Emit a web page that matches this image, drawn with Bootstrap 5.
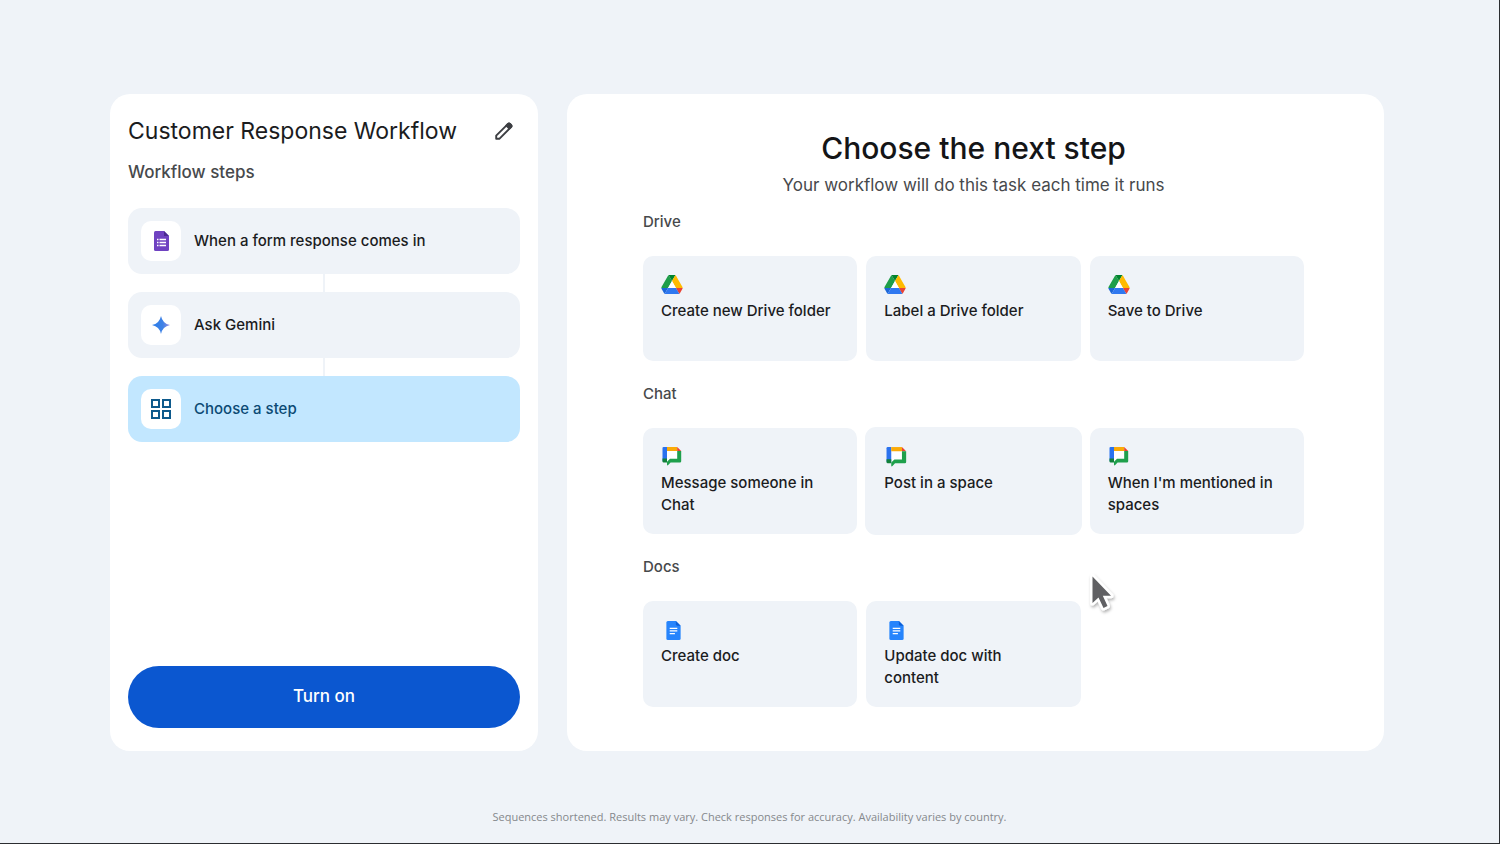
<!DOCTYPE html>
<html lang="en">
<head>
<meta charset="utf-8">
<meta name="viewport" content="width=device-width, initial-scale=1">
<title>Customer Response Workflow</title>
<link href="https://cdn.jsdelivr.net/npm/bootstrap@5.3.0/dist/css/bootstrap.min.css" rel="stylesheet">
<style>
  body { font-family: Inter, Roboto, sans-serif; font-size: 15px; line-height: 22px; color: #1b1c1e; background: #eff3f8; }
  .page { border-right: 1px solid #2b2d30; border-bottom: 1px solid #2b2d30; padding-top: 94px; }
  .board { display: grid; grid-template-columns: 428fr 817fr; gap: 29px; margin: 0 115px 0 110px; }
  .panel { background: #fff; border-radius: 20px; }
  .builder { padding: 18px 18px 23px; }
  .flow-title { font-size: 23px; line-height: 38px; font-weight: 400; color: #1b1c1e; }
  .flow-sub { font-size: 17px; line-height: 22px; font-weight: 500; color: #47494c; margin-top: 11px; }
  .edit-btn { width: 32px; height: 32px; }
  .steps { margin-top: 25px; }
  .step { min-height: 66px; padding: 12px 13px; gap: 13px; border-radius: 14px; background: #eff3f8; border: 0; font-weight: 500; color: #1b1c1e; text-align: left; }
  .step.current { background: #c2e7ff; color: #0b4a74; }
  .tile { width: 40px; height: 40px; border-radius: 10px; background: #fff; }
  .link-line { width: 2px; height: 18px; background: #eff3f8; }
  .turn-on { min-height: 62px; background: #0b57d0; border-radius: 31px; font-size: 17px; font-weight: 500; color: #fff; }
  .turn-on:hover { background: #0a4fbd; color: #fff; }
  .chooser { padding: 34px 80px 44px 76px; }
  .chooser-title { font-size: 30px; line-height: 40px; font-weight: 500; color: #141517; }
  .chooser-sub { font-size: 17px; line-height: 22px; color: #47494c; margin: 6px 0 15px; }
  .group-name { font-size: 15px; line-height: 22px; font-weight: 500; color: #47494c; margin-bottom: 23px; }
  .group + .group { margin-top: 22px; }
  .choices { display: grid; grid-template-columns: repeat(3, 1fr); gap: 9px; }
  .choice { display: flex; flex-direction: column; align-items: flex-start; gap: 4px; min-height: 105px; padding: 18px 24px 18px 18px; border: 0; border-radius: 10px; background: #eff3f8; color: #1b1c1e; font-weight: 500; text-align: left; }
  .choice.hovered { box-shadow: 0 0 0 1px #eff3f8; }
  .cursor { left: 521px; top: 476px; }
  .fine-print { font-family: "Open Sans", "Noto Sans", sans-serif; font-size: 11px; line-height: 16px; color: #85888c; padding: 0 16px 18px; }
  svg { display: block; flex: none; }
</style>
</head>
<body>
<svg width="0" height="0" class="position-absolute" aria-hidden="true">
  <symbol id="drive" viewBox="0 0 87.3 78">
    <path d="m6.6 66.85 3.85 6.65c.8 1.4 1.95 2.5 3.3 3.3l13.75-23.8h-27.5c0 1.55.4 3.1 1.2 4.5z" fill="#1c66d8"/>
    <path d="m43.65 25-13.75-23.8c-1.35.8-2.5 1.9-3.3 3.3l-25.4 44a9.06 9.06 0 0 0 -1.2 4.5h27.5z" fill="#1e9e4a"/>
    <path d="m73.55 76.8c1.35-.8 2.5-1.9 3.3-3.3l1.6-2.75 7.65-13.25c.8-1.4 1.2-2.95 1.2-4.5h-27.5l5.85 11.5z" fill="#ea4335"/>
    <path d="m43.65 25 13.75-23.8c-1.35-.8-2.9-1.2-4.5-1.2h-18.5c-1.6 0-3.15.45-4.5 1.2z" fill="#00832d"/>
    <path d="m59.8 53h-32.3l-13.75 23.8c1.35.8 2.9 1.2 4.5 1.2h50.8c1.6 0 3.15-.45 4.5-1.2z" fill="#2f78f0"/>
    <path d="m73.4 26.5-12.7-22c-.8-1.4-1.95-2.5-3.3-3.3l-13.75 23.8 16.15 28h27.45c0-1.55-.4-3.1-1.2-4.5z" fill="#ffba00"/>
    <path d="m43.65 25 16.15 28h-32.3z" fill="#fff"/>
  </symbol>
  <symbol id="chat" viewBox="0 0 20 20">
    <path d="M4.6 4.2h11v10.5h-11z" fill="#fff"/>
    <path d="M1.6 1H5v14H.5V2.100Q.5 1 1.600 1z" fill="#2b72ee"/>
    <path d="M5 1h10.200v4H5z" fill="#fbab08"/>
    <path d="M15.200 1l4 4h-4z" fill="#ea4335"/>
    <path d="M15.200 5h4v10.200q0 1.200-1.200 1.200H8.600l-2.400 2.700q-1.200.9-1.200-.5V15.800l3-3h7.200z" fill="#1fa04c"/>
    <path d="M.5 12.500H5v4H1.700Q.5 16.500.5 15.300z" fill="#11813a"/>
  </symbol>
  <symbol id="doc" viewBox="0 0 15 20">
    <path d="M1.600 0H10l5 5v13.400q0 1.600-1.600 1.600H1.600Q0 20 0 18.400V1.600Q0 0 1.600 0z" fill="#2684fc"/>
    <path d="M10 0l5 5h-3.500Q10 5 10 3.500z" fill="#0b5fd8"/>
    <path d="M3.500 7.800h8M3.500 10.500h8M3.500 13.200h5.500" stroke="#fff" stroke-width="1.300"/>
  </symbol>
</svg>

<div class="page d-flex flex-column min-vh-100">
  <main class="board">
    <section class="panel builder d-flex flex-column">
      <div class="d-flex align-items-center justify-content-between">
        <h1 class="flow-title m-0">Customer Response Workflow</h1>
        <button type="button" class="edit-btn btn p-0 border-0 d-flex align-items-center justify-content-center" aria-label="Edit name">
          <svg width="18" height="18" viewBox="0 0 18 18" fill="none" stroke="#3c3e42" stroke-width="1.900" stroke-linejoin="round"><path d="M1.200 16.800v-3.100L12.800 2.100q1.200-1.200 2.400 0l.7.7q1.200 1.200 0 2.400L4.300 16.800z"/><path d="M11.300 3.600l3.100 3.100 1.900-1.900q.6-1-.3-1.900l-.9-.9q-1-.9-1.900-.3z" fill="#3c3e42"/></svg>
        </button>
      </div>
      <h2 class="flow-sub mb-0">Workflow steps</h2>
      <div class="steps d-flex flex-column align-items-center mb-auto">
        <button type="button" class="step w-100 d-flex align-items-center">
          <span class="tile d-flex align-items-center justify-content-center">
            <svg width="15" height="20" viewBox="0 0 15 20"><path d="M1.500 0H10l5 5v13.500q0 1.500-1.500 1.500h-12Q0 20 0 18.500v-17Q0 0 1.500 0z" fill="#6f42c1"/><path d="M10 0l5 5h-5z" fill="#4a2a8f"/><path d="M5.500 8.500H12M5.500 11.500H12M5.500 14.500H12M3 8.500h1.500M3 11.500h1.500M3 14.500h1.500" stroke="#fff" stroke-width="1.300"/></svg>
          </span>
          When a form response comes in
        </button>
        <span class="link-line"></span>
        <button type="button" class="step w-100 d-flex align-items-center">
          <span class="tile d-flex align-items-center justify-content-center">
            <svg width="18" height="18" viewBox="0 0 18 18"><defs><linearGradient id="spark" x1="0" y1="0" x2="1" y2="0"><stop offset="0" stop-color="#2a7de9"/><stop offset=".6" stop-color="#3f82e6"/><stop offset="1" stop-color="#9b8fe0"/></linearGradient></defs><path d="M9 0Q10.500 7.500 18 9 10.500 10.500 9 18 7.500 10.500 0 9 7.500 7.500 9 0z" fill="url(#spark)"/></svg>
          </span>
          Ask Gemini
        </button>
        <span class="link-line"></span>
        <button type="button" class="step current w-100 d-flex align-items-center">
          <span class="tile d-flex align-items-center justify-content-center">
            <svg width="20" height="20" viewBox="0 0 20 20" fill="none" stroke="#0e5a8c" stroke-width="2"><path d="M1 1h7v7H1zM12 1h7v7h-7zM1 12h7v7H1zM12 12h7v7h-7z"/></svg>
          </span>
          Choose a step
        </button>
      </div>
      <button type="button" class="turn-on btn w-100 border-0">Turn on</button>
    </section>

    <section class="panel chooser position-relative">
      <h2 class="chooser-title text-center m-0">Choose the next step</h2>
      <p class="chooser-sub text-center">Your workflow will do this task each time it runs</p>

      <section class="group">
        <h3 class="group-name">Drive</h3>
        <div class="choices">
          <button type="button" class="choice"><svg width="22" height="22"><use href="#drive" width="22" height="19" y="1"/></svg>Create new Drive folder</button>
          <button type="button" class="choice"><svg width="22" height="22"><use href="#drive" width="22" height="19" y="1"/></svg>Label a Drive folder</button>
          <button type="button" class="choice"><svg width="22" height="22"><use href="#drive" width="22" height="19" y="1"/></svg>Save to Drive</button>
        </div>
      </section>

      <section class="group">
        <h3 class="group-name">Chat</h3>
        <div class="choices">
          <button type="button" class="choice"><svg width="22" height="22"><use href="#chat" width="20" height="20" x="1"/></svg>Message someone in Chat</button>
          <button type="button" class="choice hovered"><svg width="23" height="22"><use href="#chat" width="21" height="21" x="2"/></svg>Post in a space</button>
          <button type="button" class="choice"><svg width="22" height="22"><use href="#chat" width="20" height="20" x="1"/></svg>When I'm mentioned in spaces</button>
        </div>
      </section>

      <section class="group">
        <h3 class="group-name">Docs</h3>
        <div class="choices">
          <button type="button" class="choice"><svg width="22" height="22"><use href="#doc" width="15" height="19" x="5" y="2"/></svg>Create doc</button>
          <button type="button" class="choice"><svg width="22" height="22"><use href="#doc" width="15" height="19" x="5" y="2"/></svg>Update doc with content</button>
        </div>
      </section>

      <svg class="cursor position-absolute" width="34" height="46" viewBox="0 0 34 46" aria-hidden="true">
        <defs><filter id="soft" x="-30%" y="-30%" width="170%" height="170%"><feDropShadow dx="1" dy="2" stdDeviation="1.500" flood-color="#000" flood-opacity=".3"/></filter></defs>
        <path d="M4.500 6.500V33l6-5.500 5 10.500 4-2-4.700-10.300H23z" fill="#606163" stroke="#fff" stroke-width="5" stroke-linejoin="round" paint-order="stroke" filter="url(#soft)"/>
      </svg>
    </section>
  </main>
  <footer class="fine-print text-center mt-auto">Sequences shortened. Results may vary. Check responses for accuracy. Availability varies by country.</footer>
</div>
<script src="https://cdn.jsdelivr.net/npm/bootstrap@5.3.0/dist/js/bootstrap.bundle.min.js"></script>
</body>
</html>
